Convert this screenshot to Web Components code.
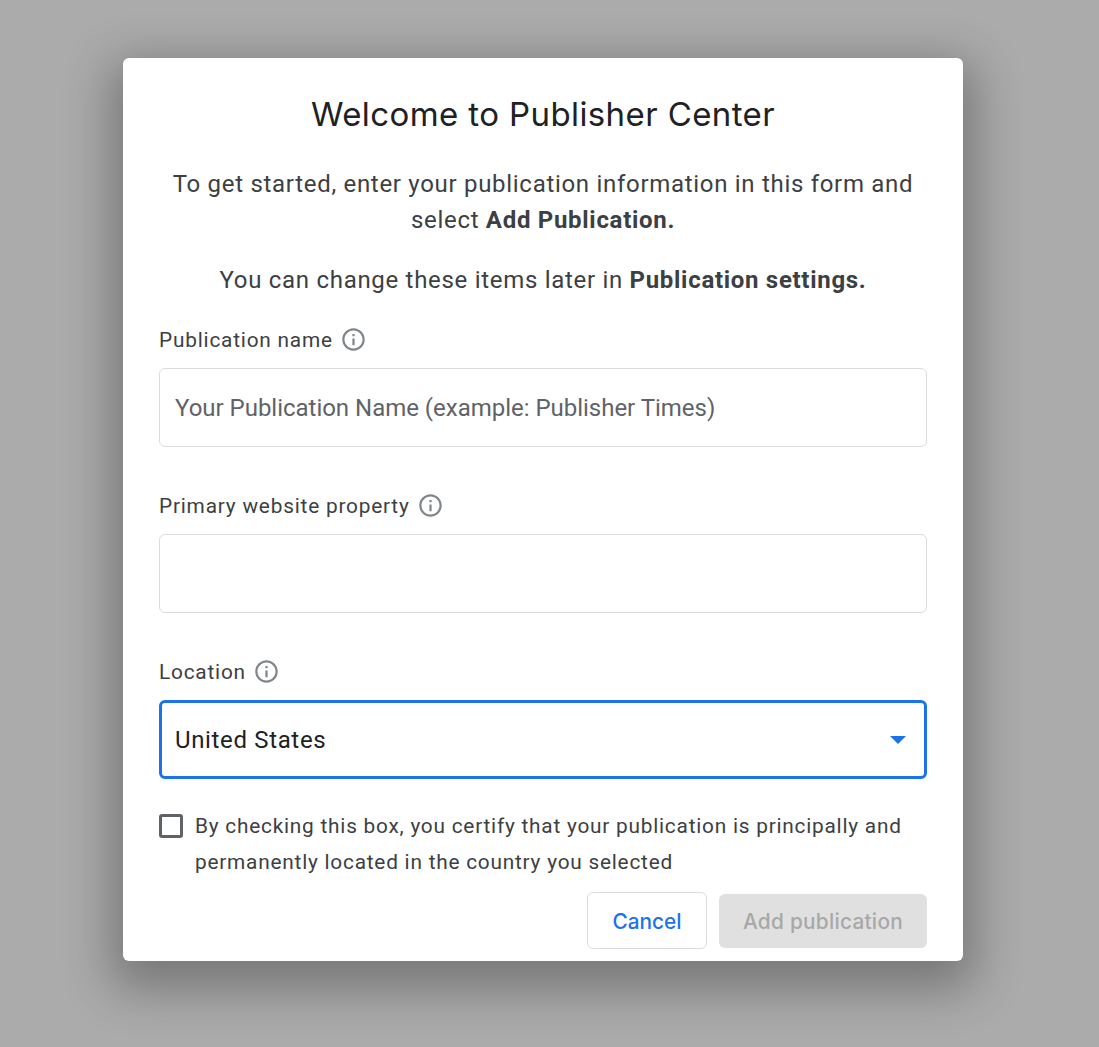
<!DOCTYPE html>
<html lang="en">
<head>
<meta charset="utf-8">
<title>Welcome to Publisher Center</title>
<style>
  html, body { margin: 0; height: 100%; background: #ababab; }
  body { font-family: Roboto, "Liberation Sans", sans-serif; }
</style>
</head>
<body>
<publisher-dialog>
  <span slot="title">Welcome to Publisher Center</span>
  <p>To get started, enter your publication information in this form and<br>select <b>Add Publication.</b></p>
  <p class="last">You can change these items later in <b>Publication settings.</b></p>
  <form-field label="Publication name" placeholder="Your Publication Name (example: Publisher Times)"></form-field>
  <form-field label="Primary website property"></form-field>
  <form-field label="Location" value="United States" select></form-field>
  <certify-check>By checking this box, you certify that your publication is principally and permanently located in the country you selected</certify-check>
  <action-button slot="actions" kind="outline">Cancel</action-button>
  <action-button slot="actions" kind="disabled">Add publication</action-button>
</publisher-dialog>

<script>
class PublisherDialog extends HTMLElement {
  constructor() {
    super();
    this.attachShadow({ mode: "open" });
    this.shadowRoot.innerHTML = `
      <style>
        :host {
          display: block;
          box-sizing: border-box;
          min-height: 100%;
          padding: 58px 136px 0 123px;
        }
        .dialog {
          box-sizing: border-box;
          height: 903px;
          padding: 36px 36px 12px;
          background: #fff;
          border-radius: 6px;
          box-shadow: 0 16px 48px 12px rgba(0, 0, 0, 0.3);
          display: flex;
          flex-direction: column;
        }
        h1 {
          margin: 0 0 32px;
          font: 400 33px/40px Inter, "Open Sans", sans-serif;
          letter-spacing: 0.4px;
          color: #202124;
          text-align: center;
        }
        .body {
          flex: 1;
          color: #3c4043;
          font-size: 24px;
          line-height: 36px;
          letter-spacing: 0.7px;
          text-align: center;
        }
        ::slotted(p) { margin: 0 0 24px; }
        ::slotted(p.last) { margin-bottom: 30px; }
        .actions {
          display: flex;
          justify-content: flex-end;
          align-items: center;
          gap: 12px;
        }
      </style>
      <div class="dialog">
        <h1><slot name="title"></slot></h1>
        <div class="body"><slot></slot></div>
        <div class="actions"><slot name="actions"></slot></div>
      </div>
    `;
  }
}

class FormField extends HTMLElement {
  constructor() {
    super();
    this.attachShadow({ mode: "open" });
  }

  connectedCallback() {
    const label = this.getAttribute("label");
    const placeholder = this.getAttribute("placeholder") || "";
    const value = this.getAttribute("value") || "";
    const select = this.hasAttribute("select");
    this.shadowRoot.innerHTML = `
      <style>
        :host {
          display: block;
          margin-bottom: 47px;
          text-align: left;
          font-family: Roboto, "Liberation Sans", sans-serif;
        }
        .label {
          display: flex;
          align-items: center;
          gap: 7.5px;
          height: 24px;
          margin-bottom: 16px;
          font-size: 20.8px;
          line-height: 24px;
          letter-spacing: 0.8px;
          color: #3c4043;
        }
        svg.info { width: 27px; height: 27px; flex: none; margin-top: -2px; }
        .box {
          box-sizing: border-box;
          height: 79px;
          padding: 0 15px;
          display: flex;
          align-items: center;
          justify-content: space-between;
          border: 1px solid #dadce0;
          border-radius: 6px;
          font-size: 24px;
          letter-spacing: -0.02px;
          color: #5f6368;
        }
        .box.select {
          border: 3px solid #1a73e8;
          padding: 0 13px;
          color: #202124;
          letter-spacing: 0.65px;
        }
        .arrow { width: 16px; height: 8px; margin-right: 5px; flex: none; }
      </style>
      <div class="label">
        <span>${label}</span>
        <svg class="info" viewBox="0 0 24 24" fill="#80868b">
          <path d="M11 7h2v2h-2zm0 4h2v6h-2zm1-9C6.48 2 2 6.48 2 12s4.48 10 10 10 10-4.48 10-10S17.52 2 12 2zm0 18c-4.41 0-8-3.59-8-8s3.59-8 8-8 8 3.59 8 8-3.59 8-8 8z"/>
        </svg>
      </div>
      <div class="box ${select ? "select" : ""}">
        <span>${value || placeholder}</span>
        ${select ? `<svg class="arrow" viewBox="0 0 16 8"><path d="M0 0h16L8 8z" fill="#1a73e8"/></svg>` : ""}
      </div>
    `;
  }
}

class CertifyCheck extends HTMLElement {
  constructor() {
    super();
    this.attachShadow({ mode: "open" });
    this.shadowRoot.innerHTML = `
      <style>
        :host {
          display: flex;
          align-items: flex-start;
          gap: 12px;
          margin-top: -18px;
          text-align: left;
          font-size: 20.8px;
          line-height: 36px;
          letter-spacing: 0.78px;
          color: #3c4043;
        }
        .box {
          box-sizing: border-box;
          flex: none;
          width: 24px;
          height: 24px;
          margin-top: 6px;
          border: 3px solid #5f6368;
          border-radius: 3px;
        }
      </style>
      <span class="box"></span>
      <span><slot></slot></span>
    `;
  }
}

class ActionButton extends HTMLElement {
  constructor() {
    super();
    this.attachShadow({ mode: "open" });
    this.shadowRoot.innerHTML = `
      <style>
        :host {
          display: block;
          font-family: Inter, Roboto, sans-serif;
          font-size: 20.8px;
          font-weight: 500;
          letter-spacing: 0;
        }
        div {
          box-sizing: border-box;
          display: flex;
          align-items: center;
          justify-content: center;
          padding-top: 1px;
          border-radius: 6px;
          white-space: nowrap;
        }
        :host([kind="outline"]) div {
          width: 120px;
          height: 57px;
          color: #1a73e8;
          background: #fff;
          border: 1px solid #dadce0;
        }
        :host([kind="disabled"]) div {
          width: 208px;
          height: 54px;
          color: #a8a8a8;
          background: #e0e0e0;
          letter-spacing: 0.27px;
        }
      </style>
      <div><slot></slot></div>
    `;
  }
}

customElements.define("publisher-dialog", PublisherDialog);
customElements.define("form-field", FormField);
customElements.define("certify-check", CertifyCheck);
customElements.define("action-button", ActionButton);
</script>
</body>
</html>
